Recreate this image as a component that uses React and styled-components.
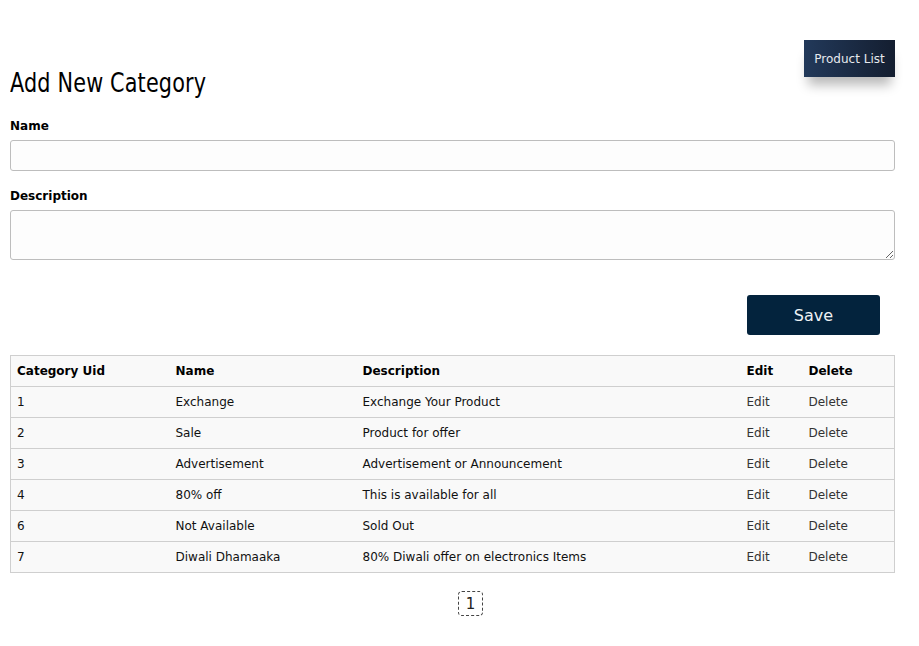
import React from "react";
import styled, { createGlobalStyle } from "styled-components";

const Global = createGlobalStyle`
  html, body { margin: 0; padding: 0; background: #fff; }
  body { font-family: "DejaVu Sans", Verdana, sans-serif; color: #000; }
`;

const Page = styled.div`
  padding: 40px 24px 30px 10px;
`;

const TopBar = styled.div`
  display: flex;
  justify-content: flex-end;
  height: 0;
`;

const NavButton = styled.button`
  width: 91px;
  height: 37px;
  border: none;
  border-radius: 0;
  background: linear-gradient(to right, #22395a, #141e30);
  color: #e6e9ee;
  font-family: "DejaVu Sans", Verdana, sans-serif;
  font-size: 12px;
  padding: 0;
  box-shadow: 0 12px 12px -4px rgba(0, 0, 0, 0.28);
`;

const Title = styled.h1`
  margin: 26px 0 0 0;
  font-family: "DejaVu Sans", sans-serif;
  font-weight: normal;
  font-size: 27px;
  line-height: 34px;
  letter-spacing: 0.2px;
  transform: scaleX(0.77);
  transform-origin: left center;
  white-space: nowrap;
`;

const Field = styled.div`
  display: flex;
  flex-direction: column;
  margin-top: ${(p) => p.$top}px;
`;

const Label = styled.label`
  font-size: 12px;
  font-weight: bold;
  line-height: 14px;
  margin-bottom: 7px;
`;

const Input = styled.input`
  box-sizing: border-box;
  height: 31px;
  border: 1px solid #bdbdbd;
  border-radius: 3px;
  background: #fdfdfd;
  width: 100%;
`;

const TextArea = styled.textarea`
  box-sizing: border-box;
  height: 50px;
  border: 1px solid #bdbdbd;
  border-radius: 3px;
  background: #fdfdfd;
  width: 100%;
  display: block;
`;

const Actions = styled.div`
  display: flex;
  justify-content: flex-end;
  padding-right: 15px;
  margin-top: 35px;
`;

const SaveButton = styled.button`
  width: 133px;
  height: 40px;
  border: none;
  border-radius: 3px;
  background: #03233d;
  color: #eef1f4;
  font-family: "DejaVu Sans", Verdana, sans-serif;
  font-size: 16px;
`;

const Table = styled.table`
  margin-top: 20px;
  width: 100%;
  table-layout: fixed;
  border-collapse: collapse;
  border: 1px solid #cfcfcf;
  font-size: 12px;
`;

const Th = styled.th`
  box-sizing: border-box;
  text-align: left;
  font-weight: bold;
  height: 31px;
  padding: 0 6px;
  background: #f9f9f9;
  border-bottom: 1px solid #cfcfcf;
  width: ${(p) => p.$w || "auto"};
`;

const Td = styled.td`
  height: 30px;
  padding: 0 6px;
  background: #f9f9f9;
  border-bottom: 1px solid #cfcfcf;
  color: ${(p) => (p.$muted ? "#333" : "#111")};
`;

const Pager = styled.div`
  display: flex;
  justify-content: center;
  margin-top: 18px;
  padding-left: 36px;
`;

const PageNum = styled.span`
  box-sizing: border-box;
  width: 25px;
  height: 25px;
  border: 1px dashed #444;
  border-radius: 4px;
  display: flex;
  align-items: center;
  justify-content: center;
  font-size: 15px;
  color: #222;
`;

const rows = [
  ["1", "Exchange", "Exchange Your Product"],
  ["2", "Sale", "Product for offer"],
  ["3", "Advertisement", "Advertisement or Announcement"],
  ["4", "80% off", "This is available for all"],
  ["6", "Not Available", "Sold Out"],
  ["7", "Diwali Dhamaaka", "80% Diwali offer on electronics Items"],
];

export default function App() {
  return (
    <Page>
      <Global />
      <TopBar>
        <NavButton>Product List</NavButton>
      </TopBar>
      <Title>Add New Category</Title>
      <Field $top={19}>
        <Label>Name</Label>
        <Input />
      </Field>
      <Field $top={18}>
        <Label>Description</Label>
        <TextArea />
      </Field>
      <Actions>
        <SaveButton>Save</SaveButton>
      </Actions>
      <Table>
        <thead>
          <tr>
            <Th $w="159px">Category Uid</Th>
            <Th $w="187px">Name</Th>
            <Th $w="384px">Description</Th>
            <Th $w="62px">Edit</Th>
            <Th>Delete</Th>
          </tr>
        </thead>
        <tbody>
          {rows.map((r) => (
            <tr key={r[0]}>
              <Td>{r[0]}</Td>
              <Td>{r[1]}</Td>
              <Td>{r[2]}</Td>
              <Td $muted>Edit</Td>
              <Td $muted>Delete</Td>
            </tr>
          ))}
        </tbody>
      </Table>
      <Pager>
        <PageNum>1</PageNum>
      </Pager>
    </Page>
  );
}
